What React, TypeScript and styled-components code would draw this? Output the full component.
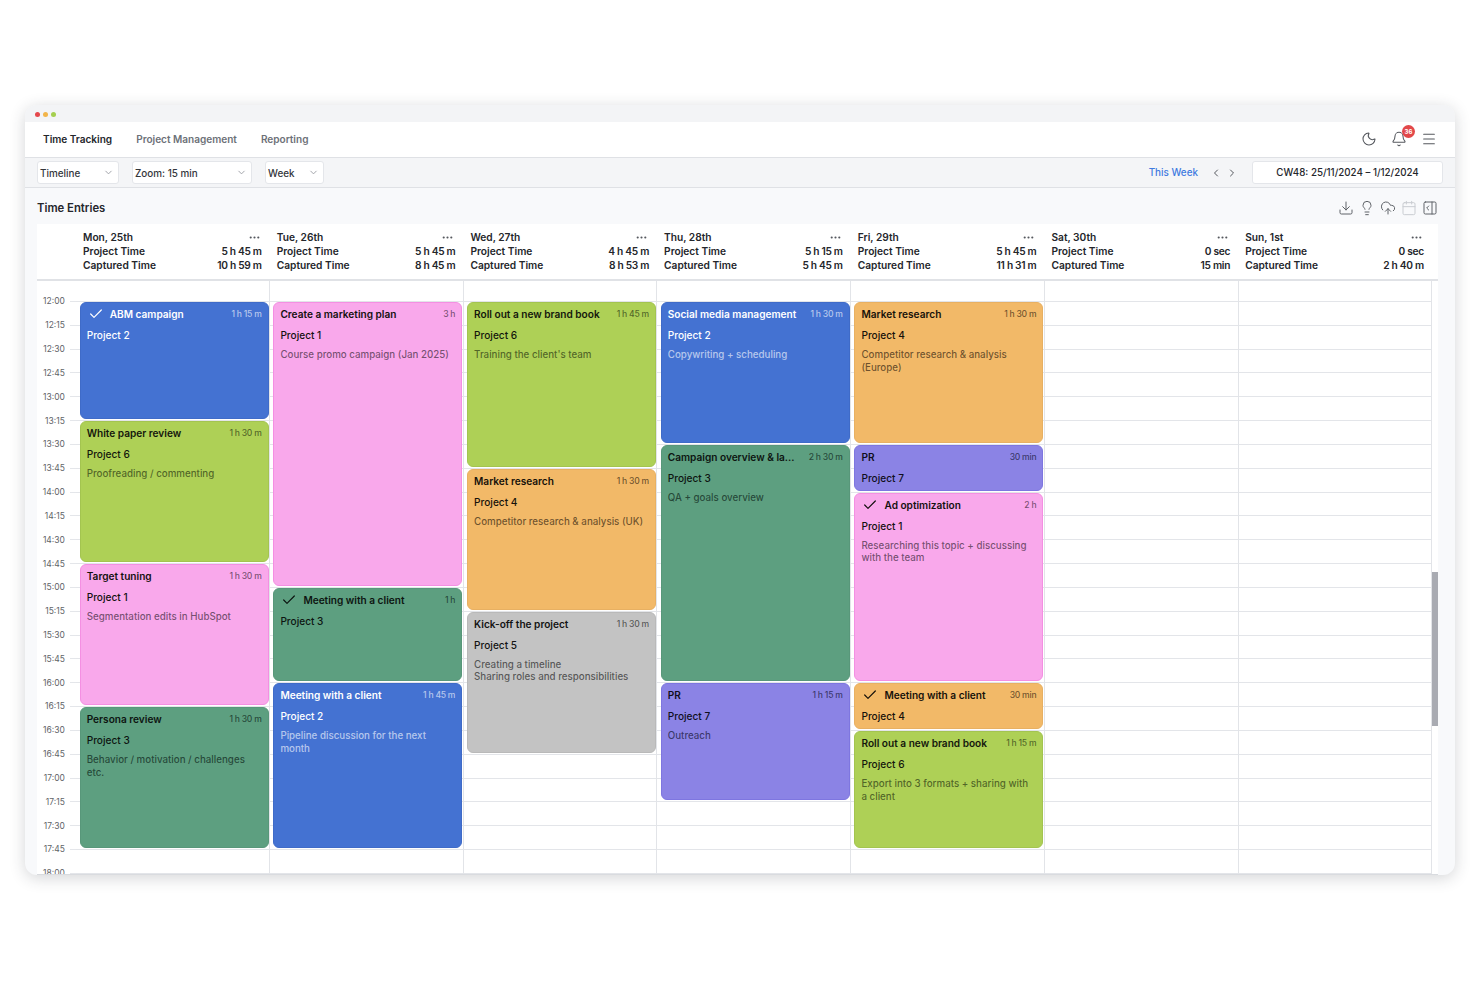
import React from 'react';
import styled, { createGlobalStyle } from 'styled-components';
import {
  Bell, Calendar, Check, ChevronDown, ChevronLeft, ChevronRight, CloudUpload, Download,
  Ellipsis, Lightbulb, Menu, Moon, PanelRightOpen,
} from 'lucide-react';

const SLOT = 23.83;
const COL = 193.7;

const Global = createGlobalStyle`
  html, body { margin: 0; padding: 0; background: #fff; }
  body { font-family: Inter, "Liberation Sans", sans-serif; color: #1b1d21; }
  * { box-sizing: border-box; }
`;

const Page = styled.div`
  width: 1480px;
  height: 987px;
  padding: 105px 25px 112px;
  overflow: hidden;
`;
const Win = styled.div`
  height: 770px;
  display: flex;
  flex-direction: column;
  border-radius: 12px;
  overflow: hidden;
  background: #f8f9fb;
  box-shadow: 0 3px 16px rgba(40, 45, 55, 0.2);
`;
const TitleBar = styled.div`
  height: 17px;
  flex: none;
  display: flex;
  align-items: center;
  gap: 3px;
  padding: 1px 0 0 10px;
  background: #f3f4f6;
`;
const Dot = styled.span<{ $c: string }>`
  width: 5px;
  height: 5px;
  border-radius: 50%;
  background: ${(p) => p.$c};
`;
const Nav = styled.div`
  height: 35px;
  flex: none;
  display: flex;
  align-items: center;
  padding: 0 18px 1px 18px;
  background: #fff;
  gap: 24px;
`;
const NavItem = styled.span<{ $active?: boolean }>`
  font-size: 10.05px;
  font-weight: 600;
  color: ${(p) => (p.$active ? '#24262b' : '#6d7178')};
`;
const NavIcons = styled.div`
  margin-left: auto;
  display: flex;
  align-items: center;
  gap: 14px;
  color: #55585e;
`;
const BellWrap = styled.div`
  position: relative;
  display: flex;
`;
const Badge = styled.span`
  position: absolute;
  top: -6px;
  left: 11px;
  width: 13px;
  height: 13px;
  border-radius: 50%;
  background: #e2484a;
  color: #fff;
  font-size: 6px;
  font-weight: 700;
  display: flex;
  align-items: center;
  justify-content: center;
`;
const Toolbar = styled.div`
  height: 31px;
  flex: none;
  display: flex;
  align-items: center;
  padding: 0 12px;
  background: #f4f5f7;
  border-top: 1px solid #dfe1e5;
  border-bottom: 1px solid #dfe1e5;
`;
const Select = styled.div<{ $w: number; $ml?: number }>`
  width: ${(p) => p.$w}px;
  height: 23px;
  margin-left: ${(p) => p.$ml ?? 0}px;
  display: flex;
  align-items: center;
  justify-content: space-between;
  padding: 0 4px 0 2px;
  background: #fff;
  border: 1px solid #e4e6ea;
  border-radius: 3px;
  font-size: 9.9px;
  font-weight: 500;
  color: #33363b;
  svg { color: #9a9da3; }
`;
const ThisWeek = styled.span`
  margin-left: auto;
  margin-top: -2px;
  font-size: 9.9px;
  font-weight: 500;
  color: #3f7ae0;
`;
const Pager = styled.div`
  display: flex;
  gap: 4px;
  margin: 0 14px 0 12px;
  color: #55585e;
`;
const DateBox = styled.div`
  width: 191px;
  height: 23px;
  display: flex;
  align-items: center;
  justify-content: center;
  background: #fff;
  border: 1px solid #e4e6ea;
  border-radius: 3px;
  font-size: 9.75px;
  font-weight: 500;
  color: #24262b;
`;
const Section = styled.div`
  flex: 1;
  min-height: 0;
  display: flex;
  flex-direction: column;
  padding: 0 17px 0 12px;
`;
const SectionHead = styled.div`
  height: 36px;
  flex: none;
  display: flex;
  align-items: center;
  justify-content: space-between;
  padding-top: 4px;
`;
const SectionTitle = styled.h2`
  margin: 0;
  font-size: 11.3px;
  font-weight: 600;
  color: #24262b;
`;
const Tools = styled.div`
  display: flex;
  gap: 5px;
  color: #5f6368;
`;
const ToolIcon = styled.span<{ $faint?: boolean }>`
  display: flex;
  color: ${(p) => (p.$faint ? '#c9ccd1' : 'inherit')};
`;
const HeadRow = styled.div`
  height: 57px;
  flex: none;
  display: flex;
  padding-left: 39px;
  background: #fff;
  border-bottom: 2px solid #e0e2e6;
`;
const HeadCol = styled.div`
  width: ${COL}px;
  flex: none;
  padding: 7px 8px 0 7px;
  font-size: 10.2px;
  font-weight: 600;
  line-height: 13.9px;
  color: #24262b;
`;
const HeadLine = styled.div`
  display: flex;
  justify-content: space-between;
  align-items: center;
  svg { color: #55585e; margin-right: 1px; }
`;
const HeadValue = styled.span`
  letter-spacing: -0.3px;
`;
const Body = styled.div`
  flex: 1;
  min-height: 0;
  display: flex;
  background: #fff;
  overflow: hidden;
  border-bottom: 1px solid #d9dbdf;
`;
const Gutter = styled.div`
  width: 39.4px;
  flex: none;
  padding-top: 20px;
`;
const TimeRow = styled.div`
  height: ${SLOT}px;
  position: relative;
  &::after {
    content: '';
    position: absolute;
    left: 33px;
    right: 0;
    top: 0;
    height: 1px;
    background: #e4e6ea;
  }
`;
const TimeLabel = styled.span`
  position: absolute;
  right: 11.5px;
  top: -4.6px;
  font-size: 8.5px;
  line-height: 11px;
  color: #5f6368;
`;
const DayCol = styled.div`
  width: ${COL}px;
  flex: none;
  padding-top: 20px;
  display: grid;
  grid-template-rows: repeat(24, ${SLOT}px);
  align-content: start;
  border-right: 1px solid #e2e4e8;
  background: repeating-linear-gradient(
    to bottom,
    transparent 0,
    transparent 20px,
    #e3e5e9 20px,
    #e3e5e9 21px,
    transparent 21px,
    transparent ${SLOT}px
  );
`;
const Track = styled.div`
  width: 6px;
  flex: none;
  padding-top: 291px;
`;
const Thumb = styled.div`
  height: 154px;
  background: #a9abb2;
`;
const tones: Record<string, { bg: string; bd: string; fg: string; sub: string }> = {
  blue: { bg: '#4472d2', bd: '#3f6bc8', fg: '#fff', sub: 'rgba(255,255,255,.62)' },
  pink: { bg: '#f9a8eb', bd: '#f48fe2', fg: '#14110f', sub: 'rgba(30,20,30,.62)' },
  lime: { bg: '#aed056', bd: '#a3c450', fg: '#14170c', sub: 'rgba(20,30,10,.62)' },
  orange: { bg: '#f2b968', bd: '#e8b062', fg: '#17120a', sub: 'rgba(30,20,10,.64)' },
  teal: { bg: '#5d9f80', bd: '#58977a', fg: '#0d1511', sub: 'rgba(5,20,15,.64)' },
  purple: { bg: '#8b83e5', bd: '#7e76e0', fg: '#100f1c', sub: 'rgba(10,10,30,.64)' },
  gray: { bg: '#c3c3c3', bd: '#b9b9b9', fg: '#131313', sub: 'rgba(20,20,20,.64)' },
};
const Card = styled.div<{ $tone: string; $start: number; $span: number }>`
  grid-row: ${(p) => p.$start + 1} / span ${(p) => p.$span};
  margin: 1px 0.5px 1px 3.3px;
  padding: 4px 6px 0;
  min-width: 0;
  overflow: hidden;
  border-radius: 6px;
  background: ${(p) => tones[p.$tone].bg};
  border: 1px solid ${(p) => tones[p.$tone].bd};
  color: ${(p) => tones[p.$tone].fg};
  --sub: ${(p) => tones[p.$tone].sub};
`;
const CardTop = styled.div`
  display: flex;
  align-items: center;
  height: 14px;
`;
const CardTitle = styled.span`
  flex: 1;
  min-width: 0;
  display: flex;
  align-items: center;
  gap: 6px;
  white-space: nowrap;
  font-size: 10.1px;
  font-weight: 600;
  svg { margin-left: 1px; flex: none; }
`;
const CardTime = styled.span`
  flex: none;
  font-size: 8.6px;
  font-weight: 500;
  letter-spacing: -0.25px;
  color: var(--sub);
`;
const CardProject = styled.div`
  margin-top: 7px;
  font-size: 10.1px;
  font-weight: 500;
  line-height: 15px;
`;
const CardNote = styled.div`
  margin-top: 6px;
  padding-right: 5px;
  font-size: 9.75px;
  font-weight: 500;
  line-height: 12.7px;
  color: var(--sub);
  white-space: pre-line;
`;

type Ev = { t: string; d: string; p: string; n?: string; tone: string; s: number; l: number; check?: boolean };
type Day = { name: string; pt: string; ct: string; evs: Ev[] };

const days: Day[] = [
  { name: 'Mon, 25th', pt: '5 h 45 m', ct: '10 h 59 m', evs: [
    { t: 'ABM campaign', d: '1 h 15 m', p: 'Project 2', tone: 'blue', s: 0, l: 5, check: true },
    { t: 'White paper review', d: '1 h 30 m', p: 'Project 6', n: 'Proofreading / commenting', tone: 'lime', s: 5, l: 6 },
    { t: 'Target tuning', d: '1 h 30 m', p: 'Project 1', n: 'Segmentation edits in HubSpot', tone: 'pink', s: 11, l: 6 },
    { t: 'Persona review', d: '1 h 30 m', p: 'Project 3', n: 'Behavior / motivation / challenges etc.', tone: 'teal', s: 17, l: 6 },
  ] },
  { name: 'Tue, 26th', pt: '5 h 45 m', ct: '8 h 45 m', evs: [
    { t: 'Create a marketing plan', d: '3 h', p: 'Project 1', n: 'Course promo campaign (Jan 2025)', tone: 'pink', s: 0, l: 12 },
    { t: 'Meeting with a client', d: '1 h', p: 'Project 3', tone: 'teal', s: 12, l: 4, check: true },
    { t: 'Meeting with a client', d: '1 h 45 m', p: 'Project 2', n: 'Pipeline discussion for the next month', tone: 'blue', s: 16, l: 7 },
  ] },
  { name: 'Wed, 27th', pt: '4 h 45 m', ct: '8 h 53 m', evs: [
    { t: 'Roll out a new brand book', d: '1 h 45 m', p: 'Project 6', n: "Training the client's team", tone: 'lime', s: 0, l: 7 },
    { t: 'Market research', d: '1 h 30 m', p: 'Project 4', n: 'Competitor research & analysis (UK)', tone: 'orange', s: 7, l: 6 },
    { t: 'Kick-off the project', d: '1 h 30 m', p: 'Project 5', n: 'Creating a timeline\nSharing roles and responsibilities', tone: 'gray', s: 13, l: 6 },
  ] },
  { name: 'Thu, 28th', pt: '5 h 15 m', ct: '5 h 45 m', evs: [
    { t: 'Social media management', d: '1 h 30 m', p: 'Project 2', n: 'Copywriting + scheduling', tone: 'blue', s: 0, l: 6 },
    { t: 'Campaign overview & la...', d: '2 h 30 m', p: 'Project 3', n: 'QA + goals overview', tone: 'teal', s: 6, l: 10 },
    { t: 'PR', d: '1 h 15 m', p: 'Project 7', n: 'Outreach', tone: 'purple', s: 16, l: 5 },
  ] },
  { name: 'Fri, 29th', pt: '5 h 45 m', ct: '11 h 31 m', evs: [
    { t: 'Market research', d: '1 h 30 m', p: 'Project 4', n: 'Competitor research & analysis (Europe)', tone: 'orange', s: 0, l: 6 },
    { t: 'PR', d: '30 min', p: 'Project 7', tone: 'purple', s: 6, l: 2 },
    { t: 'Ad optimization', d: '2 h', p: 'Project 1', n: 'Researching this topic + discussing with the team', tone: 'pink', s: 8, l: 8, check: true },
    { t: 'Meeting with a client', d: '30 min', p: 'Project 4', tone: 'orange', s: 16, l: 2, check: true },
    { t: 'Roll out a new brand book', d: '1 h 15 m', p: 'Project 6', n: 'Export into 3 formats + sharing with a client', tone: 'lime', s: 18, l: 5 },
  ] },
  { name: 'Sat, 30th', pt: '0 sec', ct: '15 min', evs: [] },
  { name: 'Sun, 1st', pt: '0 sec', ct: '2 h 40 m', evs: [] },
];

const times: string[] = [];
for (let h = 12; h <= 18; h++) {
  for (const m of ['00', '15', '30', '45']) {
    if (h === 18 && m !== '00') break;
    times.push(`${h}:${m}`);
  }
}

export default function App() {
  return (
    <Page>
      <Global />
      <Win>
        <TitleBar>
          <Dot $c="#e5484d" />
          <Dot $c="#f2b54a" />
          <Dot $c="#a5cf4f" />
        </TitleBar>
        <Nav>
          <NavItem $active>Time Tracking</NavItem>
          <NavItem>Project Management</NavItem>
          <NavItem>Reporting</NavItem>
          <NavIcons>
            <Moon size={16} strokeWidth={1.6} />
            <BellWrap>
              <Bell size={16} strokeWidth={1.6} />
              <Badge>36</Badge>
            </BellWrap>
            <Menu size={16} strokeWidth={1.6} />
          </NavIcons>
        </Nav>
        <Toolbar>
          <Select $w={82}>Timeline<ChevronDown size={11} /></Select>
          <Select $w={120} $ml={13}>Zoom: 15 min<ChevronDown size={11} /></Select>
          <Select $w={59} $ml={13}>Week<ChevronDown size={11} /></Select>
          <ThisWeek>This Week</ThisWeek>
          <Pager>
            <ChevronLeft size={12} strokeWidth={2} />
            <ChevronRight size={12} strokeWidth={2} />
          </Pager>
          <DateBox>CW48: 25/11/2024 – 1/12/2024</DateBox>
        </Toolbar>
        <Section>
          <SectionHead>
            <SectionTitle>Time Entries</SectionTitle>
            <Tools>
              <ToolIcon><Download size={16} strokeWidth={1.5} /></ToolIcon>
              <ToolIcon><Lightbulb size={16} strokeWidth={1.5} /></ToolIcon>
              <ToolIcon><CloudUpload size={16} strokeWidth={1.5} /></ToolIcon>
              <ToolIcon $faint><Calendar size={16} strokeWidth={1.5} /></ToolIcon>
              <ToolIcon><PanelRightOpen size={16} strokeWidth={1.5} /></ToolIcon>
            </Tools>
          </SectionHead>
          <HeadRow>
            {days.map((d) => (
              <HeadCol key={d.name}>
                <HeadLine>{d.name}<Ellipsis size={13} /></HeadLine>
                <HeadLine>Project Time<HeadValue>{d.pt}</HeadValue></HeadLine>
                <HeadLine>Captured Time<HeadValue>{d.ct}</HeadValue></HeadLine>
              </HeadCol>
            ))}
          </HeadRow>
          <Body>
            <Gutter>
              {times.map((t) => (
                <TimeRow key={t}><TimeLabel>{t}</TimeLabel></TimeRow>
              ))}
            </Gutter>
            {days.map((d) => (
              <DayCol key={d.name}>
                {d.evs.map((e) => (
                  <Card key={e.t + e.s} $tone={e.tone} $start={e.s} $span={e.l}>
                    <CardTop>
                      <CardTitle>
                        {e.check && <Check size={16} strokeWidth={1.8} />}
                        {e.t}
                      </CardTitle>
                      <CardTime>{e.d}</CardTime>
                    </CardTop>
                    <CardProject>{e.p}</CardProject>
                    {e.n && <CardNote>{e.n}</CardNote>}
                  </Card>
                ))}
              </DayCol>
            ))}
            <Track><Thumb /></Track>
          </Body>
        </Section>
      </Win>
    </Page>
  );
}
